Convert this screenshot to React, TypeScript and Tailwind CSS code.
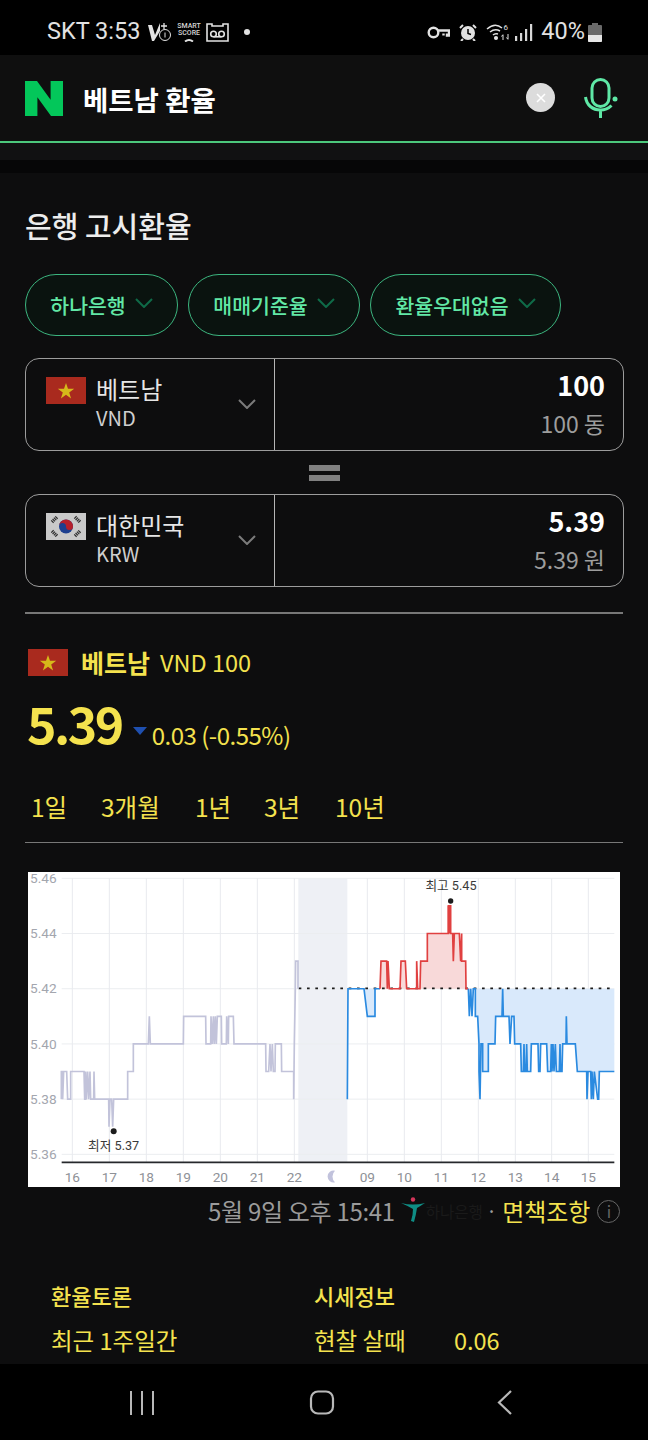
const lvl = (v: number) => 40 + (546 - v) * 82.8
const toPath = (pts: number[][], dx = 0) =>
  pts.map((p, i) => `${i ? 'L' : 'M'}${p[0] + dx} ${lvl(p[1])}`).join(' ')

const gray = [
  [124, 538], [124, 539], [128, 539], [128, 538], [131, 539], [140, 539], [143, 538], [152, 538], [152, 539], [192, 539], [194, 538], [197, 538], [197, 539], [199, 538], [203, 539], [206, 538], [210, 539], [212, 538], [221, 538], [222, 539], [224, 538], [266, 538], [267, 537], [270, 538], [275, 538], [278, 537], [281, 538], [323, 538], [323, 539], [340, 539], [340, 540], [385, 540], [388, 541], [391, 540], [490, 540], [491, 541], [557, 541], [558, 540], [572, 540], [573, 541], [577, 540], [580, 541], [583, 540], [586, 541], [589, 540], [592, 541], [604, 541], [605, 540], [619, 540], [620, 541], [625, 540], [626, 541], [640, 541], [642, 540], [737, 540], [738, 539], [746, 539], [750, 540], [753, 539], [757, 540], [760, 539], [765, 539], [766, 540], [784, 540], [785, 539], [821, 539], [821, 538], [823, 540], [826, 542], [827, 543], [834, 543], [834, 542],
]

const blueA = [[82, 538], [84, 542], [132, 542], [142, 541], [165, 541], [165, 542], [180, 542]]

const red = [
  [180, 542], [183, 543], [200, 543], [202, 542], [204, 543], [208, 542], [240, 542], [243, 543], [256, 543], [260, 542], [290, 542], [290, 543], [293, 542], [300, 542], [302, 543], [322, 543], [322, 544], [385, 544], [385, 545], [392, 545], [392, 544], [398, 544], [400, 543], [403, 544], [418, 544], [422, 543], [425, 544], [425, 543], [437, 543], [438, 542], [445, 542],
]

const blueB = [
  [445, 542], [448, 541], [452, 542], [456, 541], [460, 542], [466, 542], [466, 541], [473, 541], [477, 540], [477, 539], [480, 538], [483, 540], [488, 540], [488, 539], [505, 539], [505, 540], [525, 540], [527, 541], [546, 541], [548, 542], [550, 541], [567, 541], [570, 540], [575, 541], [582, 541], [584, 540], [602, 540], [604, 539], [610, 539], [612, 540], [614, 539], [618, 539], [620, 540], [622, 539], [632, 539], [634, 540], [654, 540], [656, 539], [660, 539], [662, 540], [680, 540], [683, 539], [692, 539], [694, 540], [696, 539], [699, 540], [702, 539], [706, 540], [709, 539], [718, 539], [720, 540], [722, 539], [726, 539], [728, 540], [738, 540], [739, 541], [741, 540], [766, 540], [772, 539], [800, 539], [801, 538], [804, 539], [812, 539], [814, 538], [816, 539], [820, 538], [823, 539], [833, 538], [836, 538], [838, 539], [883, 539],
]

const yLabels = ['5.46', '5.44', '5.42', '5.40', '5.38', '5.36']
const xLabels = [
  ['16', 157], ['17', 268], ['18', 379], ['19', 490], ['20', 601], ['21', 712], ['22', 823],
  ['09', 1042], ['10', 1153], ['11', 1264], ['12', 1375], ['13', 1486], ['14', 1595], ['15', 1705],
] as const

function Chart() {
  return (
    <div className="mt-[29px] ml-[28px] w-[592px] h-[315px] bg-white">
      <svg width="592" height="315" viewBox="24 21 1776 945" className="block font-['Roboto','Noto_Sans_CJK_KR',sans-serif]">
        <rect x="835" y="40" width="147" height="852" fill="#eef0f5" />
        {yLabels.map((_, i) => {
          const y = lvl(546 - i * 2)
          return <line key={i} x1="125" x2="1783" y1={y} y2={y} stroke="#ebedf0" strokeWidth="3" />
        })}
        {xLabels.map(([t, x]) => (
          <line key={t} x1={x} x2={x} y1="40" y2="892" stroke="#e8eaee" strokeWidth="3" />
        ))}
        {yLabels.map((t, i) => (
          <text key={t} x="30" y={lvl(546 - i * 2) + 14} fontSize="41" fill="#a3a6ae">{t}</text>
        ))}

        <path d={toPath([[1032, 542], [1042, 541], [1065, 541], [1065, 542]])} fill="#d9e9fb" />
        <path d={toPath(red, 900) + ' Z'} fill="#f8d9d9" />
        <path d={toPath(blueB, 900) + ` L1783 ${lvl(542)} Z`} fill="#d9e9fb" />

        <line x1="836" x2="1783" y1="370" y2="370" stroke="#1c1c1c" strokeWidth="5" strokeDasharray="8 17" />

        <path d={toPath(gray)} fill="none" stroke="#c2c3da" strokeWidth="5" />
        <path d={toPath(blueA, 900)} fill="none" stroke="#2a8ae0" strokeWidth="5" />
        <path d={toPath(red, 900)} fill="none" stroke="#e04040" strokeWidth="5" />
        <line x1="1288" x2="1288" y1={lvl(545)} y2={lvl(544)} stroke="#e04040" strokeWidth="10" />
        <path d={toPath(blueB, 900)} fill="none" stroke="#2a8ae0" strokeWidth="5" />

        <line x1="125" x2="1783" y1="892" y2="892" stroke="#26282c" strokeWidth="5" />

        {xLabels.map(([t, x]) => (
          <text key={t} x={x} y="950" fontSize="41" fill="#8e9197" textAnchor="middle">{t}</text>
        ))}
        <path d="M945 917a18 18 0 1 0 0 35a24 24 0 0 1 0-35z" fill="#c1c2dc" />

        <circle cx="281" cy="799" r="9" fill="#1c1c1c" />
        <text x="281" y="854" fontSize="38" fill="#3a3a3a" textAnchor="middle">최저 5.37</text>
        <circle cx="1292" cy="108" r="8" fill="#1c1c1c" />
        <text x="1293" y="75" fontSize="38" fill="#3a3a3a" textAnchor="middle">최고 5.45</text>
      </svg>
    </div>
  )
}

function Chevron({ className }: { className: string }) {
  return (
    <svg width="18" height="10" viewBox="0 0 18 10" className={className} fill="none" stroke="currentColor" strokeWidth="2">
      <path d="M1 1l8 8 8-8" />
    </svg>
  )
}

function VietnamFlag({ className }: { className: string }) {
  return (
    <svg className={className} viewBox="0 0 40 27" preserveAspectRatio="none">
      <rect width="40" height="27" fill="#a92a1e" />
      <path d="M20 6l2 5.800h6.200l-5 3.700 1.900 5.900-5.100-3.600-5.100 3.600 1.900-5.900-5-3.700H18z" fill="#d6b91a" />
    </svg>
  )
}

function KoreaFlag({ className }: { className: string }) {
  return (
    <svg className={className} viewBox="0 0 40 27" preserveAspectRatio="none">
      <rect width="40" height="27" fill="#c9c9c9" />
      <circle cx="20" cy="13.500" r="7" fill="#1d3f8f" />
      <path d="M13 13.500a7 7 0 0 1 14 0a3.500 3.500 0 0 1-7 0a3.500 3.500 0 0 0-7 0z" fill="#b5202c" />
      <g stroke="#2a2a2a" strokeWidth="3.400" strokeDasharray="1.200 .7">
        <path d="M6 9l5-5" /><path d="M29 4l5 5" /><path d="M6 18l5 5" /><path d="M29 23l5-5" />
      </g>
    </svg>
  )
}

function ConvertRow({ flag, name, code, value, sub }: { flag: React.ReactNode; name: string; code: string; value: string; sub: string }) {
  return (
    <div className="flex h-[93px] mx-[25px] w-[599px] rounded-[14px] border border-[#9c9c9c]">
      <div className="relative w-[249px] shrink-0 border-r border-[#b5b5b5] pl-[20px] pt-[18px] flex">
        {flag}
        <div className="ml-[10px] -mt-[6px]">
          <div className="text-[24px] leading-[36px] text-[#e6e6e6]">{name}</div>
          <div className="text-[20px] leading-[22px] text-[#cfcfcf]">{code}</div>
        </div>
        <Chevron className="absolute right-[18px] top-[40px] text-[#7b7b7b]" />
      </div>
      <div className="flex-1 pr-[18px] text-right">
        <div className="mt-[7px] text-[27px] leading-[38px] font-bold text-white">{value}</div>
        <div className="text-[23px] leading-[38px] text-[#9d9d9d]">{sub}</div>
      </div>
    </div>
  )
}

function Chip({ label, width }: { label: string; width: string }) {
  return (
    <div className={`flex h-[62px] items-center justify-center gap-[9px] rounded-full border border-[#3cb57f] bg-[#0a130f] ${width}`}>
      <span className="text-[20.5px] font-medium text-[#62e8a6]">{label}</span>
      <Chevron className="-mt-[4px] text-[#0f6b48]" />
    </div>
  )
}

function StatusBar() {
  return (
    <div className="flex h-[55px] shrink-0 items-center bg-black pl-[47px] pr-[46px] pt-[9px] font-['Roboto',sans-serif] text-[#e2e2e2]">
      <span className="text-[23.5px] -mt-[1px] w-[101px] whitespace-nowrap">SKT 3:53</span>
      <svg width="24" height="18" viewBox="0 0 24 18" className="-mt-[1px]" fill="none" stroke="#e2e2e2">
        <path d="M0 2h4l3 10 5-12v8l-6 10H4z" fill="#e2e2e2" stroke="none" />
        <path d="M16 0v6M13 3h6" strokeWidth="1.300" />
        <circle cx="17" cy="12" r="5.500" strokeWidth="1" />
        <path d="M17 9.500v5" strokeWidth="1" />
      </svg>
      <div className="ml-[5px] flex w-[24px] flex-col items-center text-[7px] font-medium leading-[7px] text-[#d5d5d5]">
        <span>SMART</span>
        <span>SCORE</span>
        <svg width="10" height="4" viewBox="0 0 10 4" className="mt-[1px]"><path d="M1 3.500q4-3 8 0" stroke="#e2e2e2" strokeWidth="2" fill="none" /></svg>
      </div>
      <svg width="23" height="19" viewBox="0 0 23 19" className="ml-[5px]" fill="none" stroke="#e2e2e2" strokeWidth="1.600">
        <path d="M1 1h5v2h11V1h5v17H1z" />
        <circle cx="7.500" cy="11" r="2.800" />
        <circle cx="15.500" cy="11" r="2.800" />
        <path d="M7.500 13.800h8" />
      </svg>
      <span className="ml-[15px] h-[6px] w-[6px] rounded-full bg-[#e2e2e2]" />
      <svg width="23" height="13" viewBox="0 0 23 13" className="ml-auto" fill="none" stroke="#e2e2e2" strokeWidth="2.400">
        <circle cx="6.500" cy="6.500" r="4.800" />
        <path d="M11 4.500h11v5h-2V7.500M16.500 7.500v2" />
      </svg>
      <svg width="18" height="17" viewBox="0 0 18 17" className="ml-[9px]" fill="#e2e2e2">
        <circle cx="9" cy="9" r="7" />
        <path d="M1 4l3-3M17 4l-3-3M4 15l-2 2M14 15l2 2" stroke="#e2e2e2" strokeWidth="2" />
        <path d="M9 5v4.500l3 1" stroke="#000" strokeWidth="1.500" fill="none" />
      </svg>
      <svg width="24" height="18" viewBox="0 0 24 18" className="ml-[9px]" fill="none" stroke="#e2e2e2" strokeWidth="1.500">
        <path d="M1 6q8-7 15-1M4 9q5-4 10-1M7 12q2-2 5-1" />
        <circle cx="10" cy="15" r="1.300" fill="#e2e2e2" />
        <path d="M17 17v-5M15.500 13.500l1.500-2M22 11v5M20.500 14.500l1.500 2" strokeWidth="1" />
        <text x="17.500" y="7" fontSize="8" fill="#e2e2e2" stroke="none">6</text>
      </svg>
      <svg width="18" height="17" viewBox="0 0 18 17" className="ml-[5px]" fill="#d8d8d8">
        <rect x="0" y="12" width="2.200" height="5" />
        <rect x="5" y="9" width="2.200" height="8" />
        <rect x="10" y="5" width="2.200" height="12" />
        <rect x="15" y="0" width="2.200" height="17" />
      </svg>
      <span className="ml-[8px] text-[23.5px] -mt-[1px]">40%</span>
      <svg width="14" height="19" viewBox="0 0 14 19" className="ml-[3px]">
        <path d="M4 0h6v2h3a1 1 0 0 1 1 1v15a1 1 0 0 1-1 1H1a1 1 0 0 1-1-1V3a1 1 0 0 1 1-1h3z" fill="#6a6a6a" />
        <path d="M0 12h14v6a1 1 0 0 1-1 1H1a1 1 0 0 1-1-1z" fill="#e6e6e6" />
      </svg>
    </div>
  )
}

function SearchBar() {
  return (
    <div className="flex h-[88px] shrink-0 items-center border-b-2 border-[#4cc87c] bg-[#0f0f0f] pl-[25px]">
      <svg width="38" height="35" viewBox="0 0 38 35" className="mt-[1px]">
        <path d="M25.600 18.700L12 0H0v35h12.400V16.300L26 35h12V0H25.600z" fill="#03c75a" />
      </svg>
      <span className="ml-[20px] mt-[3px] text-[27.5px] font-bold text-white">베트남 환율</span>
      <div className="ml-auto -mt-[1px] flex h-[29px] w-[29px] items-center justify-center rounded-full bg-[#dcdcdc]">
        <svg width="12" height="12" viewBox="0 0 12 12"><path d="M2 2l8 8M10 2l-8 8" stroke="#fff" strokeWidth="1.600" /></svg>
      </div>
      <svg width="34" height="40" viewBox="0 0 34 40" className="ml-[29px] mr-[30px] -mt-[1px]" fill="none" stroke="#5fe8a6" strokeWidth="3">
        <rect x="8" y="1.500" width="17" height="27" rx="8.500" />
        <path d="M1.500 19c1 8 7 13 15 13 4 0 8-1.500 11-4.500M16.500 32v8" />
        <circle cx="31" cy="21" r="2.500" fill="#5fe8a6" stroke="none" />
      </svg>
    </div>
  )
}

export default function App() {
  return (
    <div className="flex h-[1440px] w-[648px] flex-col overflow-hidden bg-[#0d0d0e] font-['Noto_Sans_CJK_KR',sans-serif]">
      <StatusBar />
      <SearchBar />
      <div className="h-[17px] shrink-0 bg-[#111112]" />
      <div className="h-[13px] shrink-0 bg-[#060607]" />

      <main className="flex-1 overflow-hidden">
        <h2 className="mt-[31px] ml-[25px] text-[29px] leading-[42px] font-medium text-[#ededed]">은행 고시환율</h2>

        <div className="mt-[28px] ml-[25px] flex gap-[10px]">
          <Chip label="하나은행" width="w-[153px]" />
          <Chip label="매매기준율" width="w-[172px]" />
          <Chip label="환율우대없음" width="w-[191px]" />
        </div>

        <div className="mt-[22px]">
          <ConvertRow flag={<VietnamFlag className="h-[27px] w-[40px] shrink-0" />} name="베트남" code="VND" value="100" sub="100 동" />
        </div>
        <div className="ml-[309px] flex h-[43px] w-[31px] flex-col justify-center gap-[4px]">
          <div className="h-[6px] bg-[#808080]" />
          <div className="h-[6px] bg-[#808080]" />
        </div>
        <ConvertRow flag={<KoreaFlag className="h-[27px] w-[40px] shrink-0" />} name="대한민국" code="KRW" value="5.39" sub="5.39 원" />

        <div className="mx-[25px] mt-[25px] h-[2px] bg-[#777]" />

        <div className="mt-[34px] ml-[28px] flex items-center text-[#f4e24e]">
          <VietnamFlag className="h-[27px] w-[40px]" />
          <span className="ml-[13px] text-[25px] leading-[28px] font-bold">베트남</span>
          <span className="ml-[10px] text-[23.5px] leading-[28px]">VND 100</span>
        </div>

        <div className="ml-[27px] mt-[8px] flex items-end text-[#f4e24e]">
          <span className="text-[50px] leading-[76px] font-semibold tracking-[-2.500px]">5.39</span>
          <span className="mb-[25px] ml-[11px] h-0 w-0 border-x-[7px] border-t-[8px] border-x-transparent border-t-[#1f50b0]" />
          <span className="mb-[7px] ml-[5px] text-[24px] leading-[36px] tracking-[-0.5px]">0.03 (-0.55%)</span>
        </div>

        <div className="mx-[25px] mt-[21px] flex h-[62px] items-start border-b border-[#777] pl-[6px] pt-[8px] text-[24.5px] leading-[36px] text-[#f4e24e]">
          <span className="w-[70px]">1일</span>
          <span className="w-[94px]">3개월</span>
          <span className="w-[69px]">1년</span>
          <span className="w-[71px]">3년</span>
          <span>10년</span>
        </div>

        <Chart />

        <div className="mt-[7px] flex h-[34px] items-center pl-[208px] text-[24px] leading-[34px]">
          <span className="text-[#9b9b9b] tracking-[-0.3px] whitespace-nowrap">5월 9일 오후 15:41</span>
          <svg width="24" height="26" viewBox="0 0 24 26" className="ml-[6px] -mt-[3px] shrink-0" fill="none">
            <circle cx="12" cy="2.500" r="2.200" fill="#d3355a" />
            <path d="M0 6q12 3 24 0q-6 4-8 5q-1 7-3 14l-3-1q2-6 2-12q-5-3-12-6z" fill="#0f8d85" />
          </svg>
          <span className="ml-[1px] text-[15.5px] text-[#1a1a1a] whitespace-nowrap">하나은행</span>
          <span className="ml-[3px] text-[20px] text-[#9b9b9b]">·</span>
          <span className="ml-[5px] text-[24px] text-[#f4e24e] whitespace-nowrap">면책조항</span>
          <span className="ml-[7px] flex h-[23px] w-[23px] shrink-0 items-center justify-center rounded-full border border-[#666] text-[16px] leading-none text-[#666]">i</span>
        </div>

        <div className="mt-[50px] grid grid-cols-[263px_1fr] pl-[51px] text-[#f4e24e]">
          <div>
            <div className="text-[22px] leading-[34px] font-medium">환율토론</div>
            <div className="mt-[11px] text-[23.5px] leading-[34px]">최근 1주일간</div>
          </div>
          <div>
            <div className="text-[22px] leading-[34px] font-medium">시세정보</div>
            <div className="mt-[11px] flex text-[23.5px] leading-[34px]">
              <span className="w-[140px]">현찰 살때</span>
              <span>0.06</span>
            </div>
          </div>
        </div>
      </main>

      <nav className="flex h-[76px] shrink-0 items-center bg-black pt-[1px] text-[#b8b8b8]">
        <svg width="24" height="24" viewBox="0 0 24 24" className="ml-[130px]" stroke="currentColor" strokeWidth="2">
          <path d="M1 0v24M12 0v24M23 0v24" />
        </svg>
        <svg width="26" height="25" viewBox="0 0 26 25" className="ml-[155px]" fill="none" stroke="currentColor" strokeWidth="2.200">
          <rect x="2" y="1.500" width="22" height="22" rx="7" />
        </svg>
        <svg width="16" height="25" viewBox="0 0 16 25" className="ml-[162px]" fill="none" stroke="currentColor" strokeWidth="2.200">
          <path d="M14 1L2 12.500 14 24" />
        </svg>
      </nav>
    </div>
  )
}
